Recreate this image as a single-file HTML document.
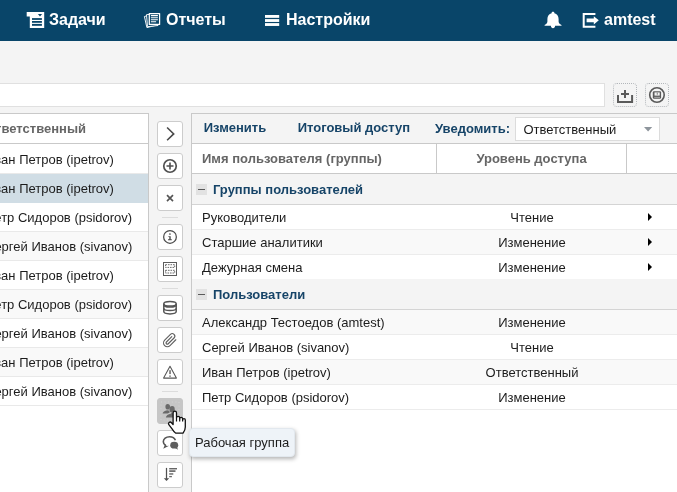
<!DOCTYPE html>
<html lang="ru">
<head>
<meta charset="utf-8">
<title>Задачи</title>
<style>
html,body{margin:0;padding:0;}
body{width:677px;height:492px;overflow:hidden;background:#f4f4f4;font-family:"Liberation Sans",sans-serif;position:relative;color:#222;}
#root{position:absolute;left:0;top:0;width:677px;height:492px;overflow:hidden;will-change:transform;}
.abs{position:absolute;}
#hdr{left:0;top:0;width:677px;height:41px;background:#094569;}
.nav{position:absolute;top:0;height:40px;line-height:39px;color:#fff;font-weight:bold;font-size:16px;white-space:nowrap;}
#search{left:-2px;top:83px;width:605px;height:22px;background:#fff;border:1px solid #e0e0e0;}
.dbtn{position:absolute;top:83px;width:22px;height:22px;border:1px dotted #b2b6ba;border-radius:4px;background:#f4f4f4;}
#topline{left:0;top:113px;width:677px;height:1px;background:#c9c9c9;}
/* left panel */
#lp{left:0;top:114px;width:148px;height:378px;background:#fff;border-right:1px solid #c9c9c9;overflow:hidden;}
#lp .h{height:29px;line-height:29px;border-bottom:1px solid #c9c9c9;margin-bottom:1px;font-weight:bold;color:#666;font-size:13px;white-space:nowrap;}
#lp .r{height:28px;line-height:29px;border-bottom:1px solid #e9e9e9;font-size:13px;white-space:nowrap;color:#1c1c1c;}
#lp .r.alt{background:#f9f9f9;}
#lp .r.sel{background:#d0dde5;border-bottom-color:#d0dde5;}
#lp span{position:relative;display:inline-block;}
/* toolbar */
.tb{position:absolute;left:157px;width:24px;height:24px;border:1px solid #ccc;border-radius:3px;background:#fff;}
.tb svg{position:absolute;left:0;top:0;}
.sep{position:absolute;left:162px;width:16px;height:1px;background:#dcdcdc;}
/* right panel */
#rp{left:191px;top:114px;width:486px;height:378px;background:#fff;border-left:1px solid #c9c9c9;overflow:hidden;}
#rp .bar{position:absolute;left:0;top:0;width:486px;height:29px;background:#f4f4f4;border-bottom:1px solid #c9c9c9;}
.lnk{position:absolute;top:0;line-height:29px;font-weight:bold;font-size:13px;color:#164468;white-space:nowrap;}
#sel{position:absolute;left:323px;top:3px;width:143px;height:22px;border:1px solid #dcdcdc;background:#fff;font-size:13px;line-height:22px;color:#1a1a1a;}
#rp .hd{position:absolute;left:0;top:30px;width:486px;height:29px;border-bottom:1px solid #c9c9c9;font-weight:bold;font-size:13px;color:#666;line-height:29px;}
.vl{position:absolute;top:0;width:1px;height:29px;background:#c9c9c9;}
.grp{position:absolute;left:0;width:486px;background:#f4f4f4;border-bottom:1px solid #d4d4d4;font-weight:bold;font-size:13px;color:#164468;}
.grp i{position:absolute;left:4px;width:11px;height:11px;background:#e2e2e2;}
.grp i:after{content:"";position:absolute;left:2px;top:5px;width:7px;height:1px;background:#5a5a5a;}
.grp b{position:absolute;left:21px;top:0;white-space:nowrap;}
.row{position:absolute;left:0;width:486px;height:24px;border-bottom:1px solid #ececec;font-size:13px;line-height:24px;color:#1c1c1c;}
.row .n{position:absolute;left:10px;top:1px;white-space:nowrap;}
.row .a{position:absolute;left:245px;width:190px;top:1px;text-align:center;white-space:nowrap;}
.row .t{position:absolute;left:456.300px;top:8px;width:0;height:0;border-left:4.500px solid #000;border-top:4px solid transparent;border-bottom:4px solid transparent;}
#tip{left:189px;top:428px;width:104px;height:27px;background:#eef3f8;border:1px solid #e2e8ee;border-radius:4px;box-shadow:1px 2px 4px rgba(0,0,0,.3);font-size:13px;line-height:27px;color:#1c1c1c;white-space:nowrap;}
</style>
</head>
<body>
<div id="root">
<div id="hdr" class="abs">
  <svg class="abs" style="left:26px;top:11px" width="20" height="18" viewBox="0 0 20 18"><path d="M0.700 1.100H18.200V16.900H3.800V5.600H0.700z" fill="#fff"/><path d="M11.900 3.100h4.200L14 5.600z" fill="#094569"/><rect x="6" y="7.100" width="9.900" height="1.800" fill="#094569"/><rect x="6" y="10" width="9.900" height="1.800" fill="#094569"/><rect x="6" y="12.900" width="9.900" height="1.900" fill="#094569"/></svg>
  <div class="nav" style="left:49px">Задачи</div>
  <svg class="abs" style="left:143px;top:11px" width="20" height="19" viewBox="0 0 20 19"><g fill="#094569" stroke="#fff" stroke-width="0.950" stroke-linejoin="round"><path d="M5.800 4.300L1.400 5.500L3.900 16.600L14.200 13.900z"/><path d="M8 3.200L3.500 3.700L4.500 15.700L15 14.500z"/><rect x="6.300" y="2.500" width="10.300" height="10.900" stroke-width="1.250"/></g><path d="M7.900 4.600h7M7.900 6.700h7M7.900 8.800h7M7.900 10.800h5.200" stroke="#fff" stroke-width="1.100" fill="none"/></svg>
  <div class="nav" style="left:166px">Отчеты</div>
  <svg class="abs" style="left:264px;top:15px" width="16" height="12" viewBox="0 0 16 12"><rect x="1" y="0" width="14.200" height="2.850" fill="#fff"/><rect x="1" y="4.100" width="14.200" height="2.850" fill="#fff"/><rect x="1" y="8.100" width="14.200" height="2.850" fill="#fff"/></svg>
  <div class="nav" style="left:286px">Настройки</div>
  <svg class="abs" style="left:544px;top:11px" width="19" height="19" viewBox="0 0 19 19"><path d="M9 0.700C9.800 0.700 10.400 1.200 10.400 2V2.300C13 3 14.600 5.200 14.600 8V10.500C14.600 12 15.600 13.200 17.500 14V14.800H0.600V14C2.400 13.200 3.400 12 3.400 10.500V8C3.400 5.200 5 3 7.600 2.300V2C7.600 1.200 8.200 0.700 9 0.700Z M6.900 14.800H11.100C11.100 16.200 10.200 17.200 9 17.200C7.800 17.200 6.900 16.200 6.900 14.800Z" fill="#fff"/></svg>
  <svg class="abs" style="left:582px;top:12px" width="18" height="17" viewBox="0 0 18 17"><path d="M13.400 2H1.700V14.700H13.400" fill="none" stroke="#fff" stroke-width="2"/><path d="M4.600 6.500h7.200V4.200l5 4.150-5 4.150V10.200H4.600z" fill="#fff"/></svg>
  <div class="nav" style="left:604px">amtest</div>
</div>

<div id="search" class="abs"></div>
<div class="dbtn" style="left:613px"><svg width="22" height="22" viewBox="0 0 22 22" style="position:absolute;left:0;top:0"><path d="M4 11.100v6.800h14.100v-6.800" fill="none" stroke="#5a5a5a" stroke-width="2"/><path d="M11 5.900v8.100M7 10h8" fill="none" stroke="#5a5a5a" stroke-width="2"/></svg></div>
<div class="dbtn" style="left:645px"><svg width="22" height="22" viewBox="0 0 22 22" style="position:absolute;left:0;top:0"><circle cx="10.950" cy="10.950" r="7.250" fill="none" stroke="#5a5a5a" stroke-width="1.600"/><rect x="6.800" y="7.200" width="8.300" height="7.500" rx="1.200" fill="#5a5a5a"/><rect x="8.500" y="8.400" width="5.200" height="3.200" fill="#f4f4f4"/><rect x="10.800" y="8.700" width="0.800" height="2" fill="#5a5a5a"/><rect x="8.200" y="12.900" width="5.800" height="0.600" fill="#e0e0e0"/></svg></div>

<div class="abs" style="left:0;top:113px;width:149px;height:1px;background:#c9c9c9"></div>
<div class="abs" style="left:191px;top:113px;width:486px;height:1px;background:#c9c9c9"></div>

<div id="lp" class="abs">
  <div class="h"><span style="left:-15px">Ответственный</span></div>
  <div class="r"><span style="left:-15px">Иван Петров (ipetrov)</span></div>
  <div class="r sel"><span style="left:-15px">Иван Петров (ipetrov)</span></div>
  <div class="r"><span style="left:-15px">Петр Сидоров (psidorov)</span></div>
  <div class="r alt"><span style="left:-15px">Сергей Иванов (sivanov)</span></div>
  <div class="r"><span style="left:-15px">Иван Петров (ipetrov)</span></div>
  <div class="r alt"><span style="left:-15px">Петр Сидоров (psidorov)</span></div>
  <div class="r"><span style="left:-15px">Сергей Иванов (sivanov)</span></div>
  <div class="r alt"><span style="left:-15px">Иван Петров (ipetrov)</span></div>
  <div class="r"><span style="left:-15px">Сергей Иванов (sivanov)</span></div>
</div>

<!-- toolbar -->
<div class="tb" style="top:121px"><svg width="24" height="24" viewBox="0 0 24 24"><path d="M9.100 5.500L15.700 11.900L9.100 18.300" fill="none" stroke="#4a4a4a" stroke-width="1.600"/></svg></div>
<div class="tb" style="top:153px"><svg width="24" height="24" viewBox="0 0 24 24"><circle cx="12" cy="12" r="6.250" fill="none" stroke="#505050" stroke-width="1.700"/><path d="M12 8.500v7M8.500 12h7" stroke="#505050" stroke-width="1.600"/></svg></div>
<div class="tb" style="top:185px"><svg width="24" height="24" viewBox="0 0 24 24"><path d="M9 9.100l6 6M15 9.100l-6 6" stroke="#555" stroke-width="1.650"/></svg></div>
<div class="sep" style="top:217px"></div>
<div class="tb" style="top:224px"><svg width="24" height="24" viewBox="0 0 24 24"><circle cx="12" cy="11.900" r="6.350" fill="none" stroke="#4a4a4a" stroke-width="1.250"/><circle cx="11.950" cy="9" r="0.850" fill="#4a4a4a"/><path d="M10.400 11.200h2.300v3.100h1.100v0.900h-3.800v-0.900h1.300v-2.200h-0.900z" fill="#4a4a4a"/></svg></div>
<div class="tb" style="top:256px"><svg width="24" height="24" viewBox="0 0 24 24"><rect x="5.500" y="5.500" width="13" height="13" fill="none" stroke="#5c5c5c" stroke-width="1"/><rect x="7.500" y="7.700" width="9.200" height="2.700" fill="none" stroke="#6a6a6a" stroke-width="1" stroke-dasharray="1.600 0.900"/><rect x="7.500" y="13.300" width="9.200" height="2.700" fill="none" stroke="#6a6a6a" stroke-width="1" stroke-dasharray="1.600 0.900"/></svg></div>
<div class="sep" style="top:288px"></div>
<div class="tb" style="top:295px"><svg width="24" height="24" viewBox="0 0 24 24"><g fill="none" stroke="#555" stroke-width="1.500"><ellipse cx="12" cy="7.800" rx="6.200" ry="2.250"/><path d="M5.800 7.800v7.800c0 1.300 2.800 2.300 6.200 2.300s6.200-1 6.200-2.300v-7.800"/><path d="M5.800 8.700c0 1.300 2.800 2.300 6.200 2.300s6.200-1 6.200-2.300" stroke-width="1.700"/><path d="M5.800 12.150c0 1.300 2.800 2.300 6.200 2.300s6.200-1 6.200-2.300" stroke-width="1.400"/></g></svg></div>
<div class="tb" style="top:327px"><svg width="24" height="24" viewBox="0 0 24 24"><path transform="translate(4.300 4.800) scale(0.630)" d="M21.440 11.050l-9.190 9.190a6 6 0 0 1-8.490-8.490l9.190-9.190a4 4 0 0 1 5.660 5.660l-9.200 9.190a2 2 0 0 1-2.830-2.830l8.490-8.480" fill="none" stroke="#606060" stroke-width="1.800" stroke-linecap="round"/></svg></div>
<div class="tb" style="top:359px"><svg width="24" height="24" viewBox="0 0 24 24"><path d="M12 6.200L18.400 18.100H5.600z" fill="none" stroke="#555" stroke-width="1.050" stroke-linejoin="round"/><rect x="11.350" y="10.200" width="1.350" height="3.900" fill="#555"/><rect x="11.350" y="15.500" width="1.350" height="1.300" fill="#555"/></svg></div>
<div class="sep" style="top:391px"></div>
<div class="tb" style="top:398px;background:#c6c6c6;border-color:#c6c6c6"><svg width="24" height="24" viewBox="0 0 24 24"><rect x="3" y="3" width="18" height="18" fill="none" stroke="#d4d4d4" stroke-width="1" stroke-dasharray="1 2.600"/><g fill="#6a6a6a"><ellipse cx="9.700" cy="7.700" rx="2.300" ry="2.800"/><path d="M4.600 14.600c0.200-1.700 2-2.800 4.600-3.400l2.200 0.600 0.300 1.800-2.200 1z"/><ellipse cx="14.100" cy="10.300" rx="2.600" ry="3.200"/><path d="M7.900 18.400c0-1.900 2.300-3.300 5-3.700l1.200-1.500 1.200 1.500c2.700 0.400 4.200 1.800 4.200 3.700z"/></g></svg></div>
<div class="tb" style="top:430px"><svg width="24" height="24" viewBox="0 0 24 24"><path d="M17.400 9.300C16.600 7.200 14.300 5.700 11.600 5.700C8.100 5.700 5.300 7.900 5.300 10.700C5.300 12.300 6.300 13.800 7.900 14.700" fill="none" stroke="#555" stroke-width="1.600"/><path d="M7.100 13.500L5.200 17.700L11.100 14.800L8.800 14.900z" fill="#555"/><ellipse cx="16.200" cy="14.200" rx="4" ry="3.400" fill="#5e5e5e"/><path d="M16.800 16.800L20 18.800L18.900 15.800z" fill="#5e5e5e"/></svg></div>
<div class="tb" style="top:462px"><svg width="24" height="24" viewBox="0 0 24 24"><path d="M8.500 4.900v11" stroke="#505050" stroke-width="1.250"/><path d="M5.800 15.300h5.400L8.500 18.100z" fill="#505050"/><path d="M11.200 5.750h7.800" stroke="#555" stroke-width="1.300"/><path d="M11.200 8.100h6.300" stroke="#6a6a6a" stroke-width="1.700"/><path d="M11.200 10.950h4.100" stroke="#707070" stroke-width="1.500"/><path d="M11.200 13.600h2.700" stroke="#666" stroke-width="1.300"/></svg></div>

<div id="rp" class="abs">
  <div class="bar">
    <div class="lnk" style="left:11.700px;top:-1px">Изменить</div>
    <div class="lnk" style="left:105.700px;top:-1px">Итоговый доступ</div>
    <div class="lnk" style="left:243px">Уведомить:</div>
    <div id="sel"><span style="position:absolute;left:7.400px;top:1px">Ответственный</span>
      <svg style="position:absolute;left:128px;top:9px" width="9" height="5" viewBox="0 0 9 5"><path d="M0 0h8.200L4.100 4.500z" fill="#8e959c"/></svg></div>
  </div>
  <div class="hd"><span style="position:absolute;left:10px;top:0;white-space:nowrap">Имя пользователя (группы)</span>
    <div class="vl" style="left:244px"></div>
    <span style="position:absolute;left:245px;width:189px;text-align:center;top:0;white-space:nowrap">Уровень доступа</span>
    <div class="vl" style="left:434px"></div>
  </div>
  <div class="grp" style="top:60px;height:30px;line-height:31px"><i style="top:10px"></i><b>Группы пользователей</b></div>
  <div class="row" style="top:91px"><span class="n">Руководители</span><span class="a">Чтение</span><span class="t"></span></div>
  <div class="row" style="top:116px;background:#f9f9f9"><span class="n">Старшие аналитики</span><span class="a">Изменение</span><span class="t"></span></div>
  <div class="row" style="top:141px;border-bottom-color:#f4f4f4"><span class="n">Дежурная смена</span><span class="a">Изменение</span><span class="t"></span></div>
  <div class="grp" style="top:166px;height:29px;line-height:29px"><i style="top:9px"></i><b>Пользователи</b></div>
  <div class="row" style="top:196px;background:#f9f9f9"><span class="n">Александр Тестоедов (amtest)</span><span class="a">Изменение</span></div>
  <div class="row" style="top:221px"><span class="n">Сергей Иванов (sivanov)</span><span class="a">Чтение</span></div>
  <div class="row" style="top:246px;background:#f9f9f9"><span class="n">Иван Петров (ipetrov)</span><span class="a">Ответственный</span></div>
  <div class="row" style="top:271px"><span class="n">Петр Сидоров (psidorov)</span><span class="a">Изменение</span></div>
</div>

<div id="tip" class="abs"><span style="position:absolute;left:5px;top:0">Рабочая группа</span></div>

<svg class="abs" style="left:160px;top:405px" width="28" height="30" viewBox="0 0 28 30"><path d="M13.100 19.600V7.900C13.100 6.900 13.800 6.200 14.800 6.200C15.800 6.200 16.500 6.900 16.500 7.900V13.100C16.500 12.100 17.200 11.400 18.100 11.400C19 11.400 19.700 12.100 19.700 13.100V13.900C19.700 13 20.300 12.300 21.150 12.300C22 12.300 22.600 13 22.600 13.900V14.900C22.600 14.100 23.200 13.600 23.950 13.600C24.700 13.600 25.300 14.200 25.300 15V22C25.300 25.200 24 26.700 23 28.200H15.800C14.300 27.300 12.900 25.200 11.700 23.300L9 19.800C8.300 19 8.400 18 9.100 17.400C9.800 16.800 10.800 16.900 11.500 17.700L13.100 19.600Z" fill="#fff" stroke="#111" stroke-width="1.300" stroke-linejoin="round"/><path d="M16.500 13v3.600M19.700 13.800v2.800M22.600 14.800v1.800" fill="none" stroke="#111" stroke-width="1.200"/></svg>
</div>
</body>
</html>
